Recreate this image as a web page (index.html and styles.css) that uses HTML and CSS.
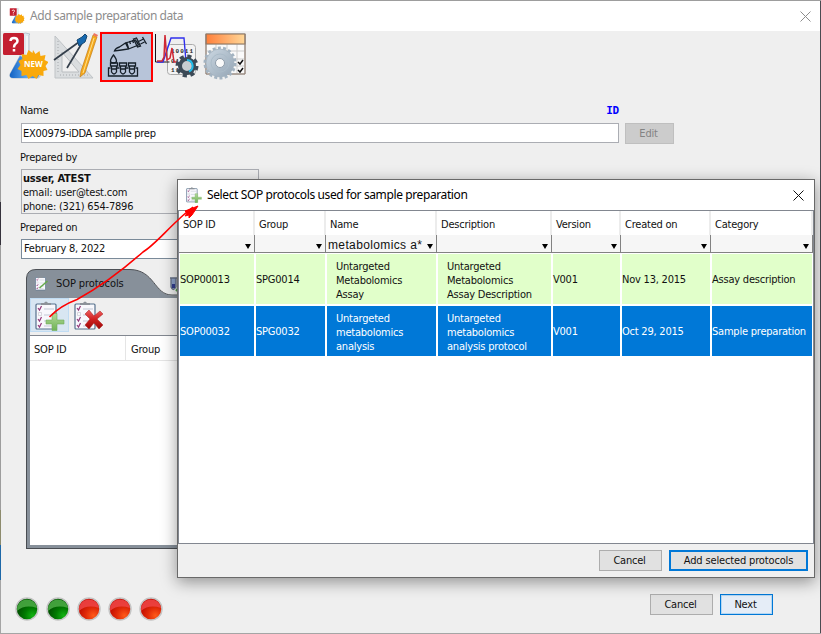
FILE: index.html
```html
<!DOCTYPE html>
<html lang="en">
<head>
<meta charset="utf-8">
<title>Add sample preparation data</title>
<link rel="stylesheet" href="styles.css">
</head>
<body>
<svg class="defs" width="0" height="0">
  <defs>
    <radialGradient id="green" cx=".75" cy=".8" r=".7"><stop offset="0" stop-color="#12b312"/><stop offset=".5" stop-color="#007a00"/><stop offset="1" stop-color="#005000"/></radialGradient>
    <radialGradient id="red" cx=".7" cy=".8" r=".7"><stop offset="0" stop-color="#ff5a18"/><stop offset=".5" stop-color="#e02a08"/><stop offset="1" stop-color="#c00c00"/></radialGradient>
    <linearGradient id="orange" x2="1"><stop offset="0" stop-color="#ff7f3a"/><stop offset="1" stop-color="#ffd899"/></linearGradient>
    <linearGradient id="steel" x2="1" y2="1"><stop offset="0" stop-color="#ccd8e2"/><stop offset="1" stop-color="#94a5b5"/></linearGradient>
    <linearGradient id="liquid" x2="1"><stop offset="0" stop-color="#1262c4"/><stop offset=".6" stop-color="#5fa8ee"/><stop offset="1" stop-color="#2f7fd8"/></linearGradient>
    <linearGradient id="cross" x2="0" y2="1"><stop offset="0" stop-color="#f06060"/><stop offset=".5" stop-color="#cf2020"/><stop offset="1" stop-color="#9c0808"/></linearGradient>
    <linearGradient id="plus" x2="0" y2="1"><stop offset="0" stop-color="#b2d99a"/><stop offset="1" stop-color="#6fb355"/></linearGradient>
    <symbol id="clip" viewBox="0 0 30 30">
      <rect x="1" y="3" width="20" height="25" rx="1" fill="#f8f8fc" stroke="#55708c" stroke-width="1.2"/>
      <path d="M6 4V2h3q2-3 4 0h3v2z" fill="#8c9299"/>
      <path d="M9 8h10M9 14h10M9 20h9M9 25h8" stroke="#c3c8d6"/>
      <path d="M3 7l1.500 2 2-4M3 18l1.500 2 2-4M3 24l1.500 2 2-4" fill="none" stroke="#93387a" stroke-width="1.200"/>
      <path d="M3.500 11.500h3v3h-3z" fill="none" stroke="#c8c8d0" stroke-width=".7"/>
    </symbol>
    <symbol id="clip-add" viewBox="0 0 30 30">
      <use href="#clip" width="30" height="30"/>
      <path d="M17 12.500h5v6.500h7v4h-7v6.500h-5v-6.500h-6v-4h6z" fill="url(#plus)" stroke="#72ac5c" stroke-width=".6"/>
    </symbol>
    <symbol id="flask" viewBox="0 0 46 48">
      <path d="M20 2q3-2 8 0l-1 1v17l11 22q1 4-3 4H11q-4 0-3-4l12-22z" fill="#dfe7ee" stroke="#a9b8c7" stroke-width=".8"/>
      <path d="M18 24l10 3 9 15q0 4-3 4H11q-4 0-3-4z" fill="url(#liquid)"/>
      <path d="M25 4v18l7 15" fill="none" stroke="#fff" stroke-width="1.500" opacity=".7"/>
      <rect x="1" y="1" width="21" height="22" rx="1.500" fill="#c41f30"/>
      <path d="M8.500 9q0-3 3.500-3t3.500 3q0 2-2 3-1.500 1-1.500 3.500M12 17v2.500" fill="none" stroke="#fff" stroke-width="2.500"/>
      <path d="M31 18l2.500 4 4-3 1 5 5-1-1 5 4 2-3 4 2 4-4 1 0 5-5-1-2 4-4-3-4 3-2-4-5 1 0-5-4-2 3-4-2-4 4-2-1-5 5 1 2-5 4 3z" fill="#f9a90c"/>
    </symbol>
  </defs>
</svg>
<div class="window">
  <header class="titlebar">
    <svg class="app-icon" viewBox="0 0 46 48"><use href="#flask" width="46" height="48"/></svg>
    <span class="title">Add sample preparation data</span>
    <svg class="close" viewBox="0 0 11 11"><path d="M.5.5l10 10M10.500.5L.5 10.500"/></svg>
  </header>
  <nav class="toolbar">
    <div class="tool tool-new">
      <svg viewBox="0 0 46 48"><use href="#flask" width="46" height="48"/></svg><b class="new">NEW</b>
    </div>
    <svg class="tool" viewBox="0 0 46 48">
      <path d="M3 4v42h38z" fill="#dadddf" stroke="#bfc3c6"/><path d="M10 20v20h17z" fill="#efefef" stroke="#b9bdc0"/>
      <path d="M6 9v33M8 43h28" stroke="#b8bbbe" stroke-width="1.500" stroke-dasharray="1 2"/>
      <path d="M45 5l-4-2-12 36-1 6 5-4z" fill="#f5a91c" stroke="#ba7413" stroke-width=".6"/><path d="M45 5l-4-2 1-2 4 2z" fill="#ef7460"/><path d="M42 6L31 41" stroke="#ffe08b"/>
      <path d="M27 10L2 28M30 11L15 36" fill="none" stroke="#343f4b" stroke-width="1.700"/><path d="M25 8l5-3 3-3 2 2-2 6-6 4z" fill="#1769af" stroke="#174872"/>
    </svg>
    <div class="tool tool-active">
      <svg viewBox="0 0 48 46" fill="none" stroke="#16202a" stroke-width="1.300">
        <path d="M12 17q1-3 5-4l6-4 3 6-7 1zM23 9l10-3 3 5-10 4M24 8l2 6M27 7l1 3M30 6l1 3M31 5l3-1 4 8-3 1zM35 8l6-3M38 10l4-2M40 3l4 7"/>
        <path d="M11 21q-6 8 0 8t0-8z"/>
        <path d="M8 34H6v8h29v-8h-2M14 34h3M23 34h3M8 29h7v3H8zM17 29h7v3h-7zM26 29h7v3h-7zM9 32v6q2.500 4 5 0v-6M18 32v6q2.500 4 5 0v-6M27 32v6q2.500 4 5 0v-6M9 35h5M18 35h5M27 35h5"/>
      </svg>
    </div>
    <svg class="tool tool-signal" viewBox="0 0 46 48">
      <rect x="13.500" y="12.500" width="28" height="30" rx="3" fill="#f3f3f3" stroke="#aaa"/>
      <g class="bits"><text x="17" y="21">10011</text><text x="17" y="31">01010</text><text x="17" y="40">11001</text></g>
      <path d="M1.500 2v28h14" fill="none" stroke="#1a1018"/><path d="M3 30h6L17 6h13l2 24h-3" fill="none" stroke="#3030ed" stroke-width="1.400"/>
      <path d="M3 29h5l2-4 1-22 2 25 3-2 2-10 2 14h3" fill="none" stroke="#cf2834" stroke-width="1.500"/>
      <circle cx="33" cy="34" r="9.500" fill="none" stroke="#3c4a57" stroke-width="4" stroke-dasharray="4 3.460"/><circle cx="33" cy="34" r="7" fill="#c8cdd1" stroke="#3c4a57" stroke-width="4"/>
      <path d="M33 28a6 6 0 0 1 2 11.500" fill="none" stroke="#20bdec" stroke-width="2"/>
    </svg>
    <svg class="tool" viewBox="0 0 46 48">
      <path d="M4 2h39v40H4z" fill="#fafafa" stroke="#aaa"/><path d="M4 12h38M4 19h38M4 27h38M4 34h38M14 12v30M25 12v30M35 12v30" stroke="#ccc"/>
      <rect x="4" y="2" width="39" height="10" fill="url(#orange)" stroke="#87705c"/><path d="M4 2v40h39V2" fill="none" stroke="#927e70"/>
      <path d="M36 30l2 2 3-4M36 38l2 2 3-4" stroke="#111" stroke-width="1.500" fill="none"/>
      <circle cx="18" cy="31" r="15" fill="none" stroke="#a3b3c1" stroke-width="3" stroke-dasharray="3 2.236"/>
      <circle cx="18" cy="31" r="14" fill="url(#steel)" stroke="#a0b0bd" stroke-width=".7"/><circle cx="18" cy="31" r="9" fill="none" stroke="#abbcc9"/><circle cx="18" cy="31" r="4.500" fill="#fafafa" stroke="#8f9daa"/>
    </svg>
  </nav>
  <main class="form">
    <div class="labels"><span>Name</span><b class="id">ID</b></div>
    <div class="row"><div class="input">EX00979-iDDA samplle prep</div><div class="button disabled">Edit</div></div>
    <div class="label">Prepared by</div>
    <div class="person"><b>usser, ATEST</b><span>email: user@test.com</span><span>phone: (321) 654-7896</span></div>
    <div class="label label-date">Prepared on</div>
    <div class="date">February 8, 2022</div>
    <section class="tabs">
      <svg class="tab-shape" viewBox="0 0 760 29"><path d="M.5 29V9Q1 .5 10 .5H104C129 1 128 26 146 26.500H760V29" fill="#87909a"/><path d="M104 .5C129 1 128 26 146 26H240V.5z" fill="#efefef"/><path d="M.5 29V9Q1 .5 10 .5H104C129 1 128 26 146 26H760" fill="none" stroke="#4d5055"/></svg>
      <div class="tab-line">
        <svg class="tab-icon" viewBox="0 0 30 30"><use href="#clip" width="30" height="30"/><path d="M9 24L25 10" stroke="#65a94a" stroke-width="3"/></svg>
        <span>SOP protocols</span>
        <svg class="tube" viewBox="0 0 12 16"><path d="M1 2h7M2 2v9q2 5 5 0V2" fill="#8ea2ca" stroke="#667086" stroke-width="1.300"/><path d="M3 8h3v4H3z" fill="#333f90"/><path d="M7 15l5-6" stroke="#55a04e" stroke-width="2"/></svg>
      </div>
      <div class="tab-body">
        <div class="mini-bar">
          <div class="mini selected"><svg viewBox="0 0 30 30"><use href="#clip-add" width="30" height="30"/></svg></div>
          <div class="mini"><svg viewBox="0 0 30 30"><use href="#clip" width="30" height="30"/><path d="M11 13l4-4 5 6 6-5 3 3-6 5 6 6-4 4-5-6-5 6-4-4 5-6z" fill="url(#cross)" stroke="#a51c1c" stroke-width=".5"/></svg></div>
        </div>
        <div class="mini-table"><span>SOP ID</span><span>Group</span></div>
      </div>
    </section>
  </main>
  <footer class="footer">
    <div class="lights">
      <svg viewBox="0 0 24 24"><circle cx="12" cy="12" r="11" fill="url(#green)" stroke="#c5c5c5" stroke-width="1.500"/><path d="M2 14a10 10 0 0 1 20-3Q10 7 2 14" fill="#4aab43" opacity=".88"/></svg>
      <svg viewBox="0 0 24 24"><circle cx="12" cy="12" r="11" fill="url(#green)" stroke="#c5c5c5" stroke-width="1.500"/><path d="M2 14a10 10 0 0 1 20-3Q10 7 2 14" fill="#4aab43" opacity=".88"/></svg>
      <svg viewBox="0 0 24 24"><circle cx="12" cy="12" r="11" fill="url(#red)" stroke="#c5c5c5" stroke-width="1.500"/><path d="M2 14a10 10 0 0 1 20-3Q10 7 2 14" fill="#ee4444" opacity=".88"/></svg>
      <svg viewBox="0 0 24 24"><circle cx="12" cy="12" r="11" fill="url(#red)" stroke="#c5c5c5" stroke-width="1.500"/><path d="M2 14a10 10 0 0 1 20-3Q10 7 2 14" fill="#ee4444" opacity=".88"/></svg>
      <svg viewBox="0 0 24 24"><circle cx="12" cy="12" r="11" fill="url(#red)" stroke="#c5c5c5" stroke-width="1.500"/><path d="M2 14a10 10 0 0 1 20-3Q10 7 2 14" fill="#ee4444" opacity=".88"/></svg>
    </div>
    <div class="actions"><div class="button cancel">Cancel</div><div class="button next">Next</div></div>
  </footer>
</div>
<section class="dialog">
  <header class="dialog-title">
    <svg class="dialog-icon" viewBox="0 0 30 30"><use href="#clip-add" width="30" height="30"/></svg>
    <span class="title">Select SOP protocols used for sample preparation</span>
    <svg class="close" viewBox="0 0 11 11"><path d="M.5.5l10 10M10.500.5L.5 10.500"/></svg>
  </header>
  <div class="table">
    <div class="grid head"><span>SOP ID</span><span>Group</span><span>Name</span><span>Description</span><span>Version</span><span>Created on</span><span>Category</span></div>
    <div class="grid filter"><span></span><span></span><span>metabolomics a*</span><span></span><span></span><span></span><span></span></div>
    <div class="grid record"><span>SOP00013</span><span>SPG0014</span><span class="multi">Untargeted<br>Metabolomics<br>Assay</span><span class="multi">Untargeted<br>Metabolomics<br>Assay Description</span><span>V001</span><span>Nov 13, 2015</span><span>Assay description</span></div>
    <div class="grid record active"><span>SOP00032</span><span>SPG0032</span><span class="multi">Untargeted<br>metabolomics<br>analysis</span><span class="multi">Untargeted<br>metabolomics<br>analysis protocol</span><span>V001</span><span>Oct 29, 2015</span><span>Sample preparation</span></div>
  </div>
  <footer class="dialog-actions"><div class="button cancel">Cancel</div><div class="button add">Add selected protocols</div></footer>
</section>
<svg class="arrow" width="821" height="634" viewBox="0 0 821 634"><path d="M49.500 317C57 309 65 304 77 299.500C98 288 118 274 143 252C153 246 165 232 177 221C182 216 188 211 193 207" fill="none" stroke="#f00" stroke-width="1.600"/><path d="M198 206l-13 5 2 2-2 3 4-1 0 3 3-3z" fill="#f00" stroke="#f00"/></svg>
</body>
</html>
```

FILE: styles.css
```css
* { box-sizing: border-box; }
body { margin: 0; width: 821px; height: 634px; overflow: hidden; background: linear-gradient(#9d9d9d 202px, #35323c 202px 245px, #9d9d9d 245px 510px, #8d8b6d 510px 545px, #1d68a8 545px 580px, #a5a5a5 580px); color: #111; font: 11px/14px "DejaVu Sans Condensed", "DejaVu Sans", sans-serif; font-stretch: condensed; letter-spacing: -.22px; }
svg { display: block; flex: none; }
span, b { white-space: nowrap; }
.defs { position: absolute; }
.window { margin: 1px 0 0 1px; width: 820px; height: 632px; display: flex; flex-direction: column; background: #efefef; border-right: 1px solid #4b4b51; }
.titlebar { height: 30px; display: flex; align-items: center; padding: 0 9px 0 8px; background: #fff; color: #8d8d8d; }
.app-icon { width: 16px; height: 16px; }
.title { flex: 1; margin-left: 5px; font: 12px/16px "Noto Sans", sans-serif; letter-spacing: -.42px; }
.dialog-title .title { letter-spacing: -.39px; color: #000; }
.close { width: 11px; height: 11px; fill: none; stroke: currentColor; stroke-width: 1; }
.toolbar { height: 54px; padding: 1px 1px 0; display: flex; }
.tool { width: 46px; height: 48px; margin-right: 4px; }
.tool-new { position: relative; }
.new { position: absolute; left: 22px; top: 25px; color: #fff; font: bold 8px/14px "Open Sans", sans-serif; letter-spacing: 0; }
.tool-active { width: 53px; height: 50px; margin: 0 1px 0 -2px; border: 2px solid #f00; background: #b7c4d9; }
.tool-active svg { width: 49px; height: 46px; }
.tool-signal { margin-right: 2px; }
.bits { font: bold 6px "Liberation Mono", monospace; letter-spacing: 1px; fill: #282828; }
.form { padding: 19px 0 0 19px; }
.labels { width: 599px; height: 19px; display: flex; justify-content: space-between; }
.id { color: #00f; font: bold 11px/14px "DejaVu Sans Mono", monospace; }
.row { display: flex; gap: 6px; height: 21px; margin-left: 1px; }
.input { width: 598px; height: 20px; padding: 3px 1px 0; background: #fff; border: 1px solid #abadb3; letter-spacing: -.3px; }
.button { height: 21px; display: flex; align-items: center; justify-content: center; border: 1px solid #adadad; background: #e1e1e1; }
.disabled { width: 49px; padding-top: 1px; padding-right: 2px; border-color: #bfbfbf; background: #ccc; color: #838383; }
.label { height: 25px; padding-top: 7px; }
.person { width: 238px; height: 45px; margin-left: 1px; border: 1px solid #abadb3; padding: 2px 0 0 1px; display: flex; flex-direction: column; letter-spacing: -.22px; }
.label-date { height: 25px; }
.date { width: 238px; height: 20px; margin-left: 1px; padding: 2px; background: #fff; border: 1px solid #7a8a99; }
.tabs { width: 760px; height: 280px; margin: 10px 0 0 6px; position: relative; }
.tab-shape { position: absolute; width: 760px; height: 29px; }
.tab-line { height: 29px; position: relative; display: flex; align-items: center; padding-left: 9px; }
.tab-icon { width: 15px; height: 15px; }
.tab-line span { width: 107px; margin-left: 6px; letter-spacing: -.08px; }
.tube { width: 12px; height: 16px; margin-left: 6px; }
.tab-body { height: 251px; padding: 0 3px 3px; background: #87909a; border: solid #494d52; border-width: 0 1px 1px; }
.mini-bar { height: 37px; display: flex; background: #efefef; }
.mini { width: 39px; height: 34px; padding: 3px 5px; }
.mini svg { width: 30px; height: 30px; }
.selected { background: #d8e6f2; border: 1px solid #c0dcf3; padding: 2px 4px; }
.mini-table { height: 210px; display: flex; background: #fff; border-top: 1px solid #828790; }
.mini-table span { width: 96px; height: 25px; padding: 7px 4px 4px; border-right: 1px solid #e5e5e5; border-bottom: 1px solid #e5e5e5; }
.mini-table span + span { padding-left: 5px; }
.footer { margin-top: auto; padding: 0 47px 12px 14px; display: flex; align-items: flex-end; justify-content: space-between; }
.lights { display: flex; gap: 7px; }
.lights svg { width: 24px; height: 24px; }
.actions { display: flex; gap: 7px; margin-bottom: 6px; }
.cancel { width: 63px; padding-right: 2px; }
.next { width: 53px; padding-right: 2px; border-color: #0078d7; background: #e5edf7; box-shadow: inset 0 0 0 1px #b4d7f3; }
.dialog { position: absolute; left: 177px; top: 179px; width: 638px; height: 399px; border: 1px solid #696969; background: #f0f0f0; box-shadow: 0 4px 15px #0006; }
.dialog-title { height: 30px; display: flex; align-items: center; padding: 0 10px 0 8px; background: #fff; }
.dialog-icon { width: 16px; height: 16px; }
.table { height: 334px; border: 1px solid #828790; background: #fff; }
.grid { display: grid; width: 634px; grid-template-columns: 76px 71px 111px 115px 69px 90px 102px; }
.head span { height: 24px; padding: 7px 4px 3px; border-right: 2px solid #ececec; }
.filter span { height: 18px; padding: 2px 2px 0; background: #f6f6f6; border: solid #828282; border-width: 0 1px 1px 0; position: relative; font: 12px/16px "Liberation Sans", sans-serif; letter-spacing: .37px; }
.filter span::after { content: ""; position: absolute; right: 3px; bottom: 3px; border: solid transparent; border-width: 5px 3px 0; border-top-color: #000; }
.record { height: 52px; }
.record span { display: flex; align-items: center; margin: 1px; padding: 2px 0 0; background: #e1ffca; }
.record .multi { padding: 3px 0 0 9px; }
.active { color: #fff; }
.record.active span { background: #0078d7; }
.dialog-actions { display: flex; justify-content: flex-end; gap: 7px; padding: 6px 6px 5px; }
.add { width: 139px; border: 2px solid #0078d7; letter-spacing: -.15px; }
.arrow { position: absolute; left: 0; top: 0; }
```
